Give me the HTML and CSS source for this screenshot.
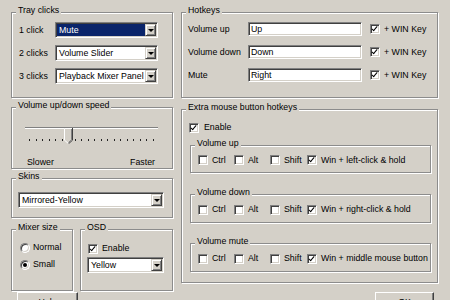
FILE: index.html
```html
<!DOCTYPE html>
<html>
<head>
<meta charset="utf-8">
<link rel="stylesheet" href="styles.css">
</head>
<body>
<div class="dialog">
  <div class="col left">
    <div class="group tray">
      <span class="title">Tray clicks</span>
      <div class="row"><span class="lbl">1 click</span><div class="combo w103"><span class="val sel">Mute</span><span class="dd"></span></div></div>
      <div class="row"><span class="lbl">2 clicks</span><div class="combo w103"><span class="val">Volume Slider</span><span class="dd"></span></div></div>
      <div class="row"><span class="lbl">3 clicks</span><div class="combo w103"><span class="val">Playback Mixer Panel</span><span class="dd"></span></div></div>
    </div>
    <div class="group speed">
      <span class="title">Volume up/down speed</span>
      <div class="slider">
        <div class="channel"></div>
        <div class="ticks"><i></i><i></i><i></i><i></i><i></i><i></i><i></i><i></i><i></i><i></i><i></i><i></i><i></i><i></i><i></i><i></i><i></i><i></i><i></i><i></i></div>
        <svg class="thumb" width="9" height="16" viewBox="0 0 9 16">
          <path d="M0 0H9V12L4.5 16L0 12Z" fill="#d4d0c8"/>
          <path d="M0.5 12.2V0.5H8" stroke="#fff" fill="none"/>
          <path d="M0.5 12.2L4.5 15.6" stroke="#fff" fill="none"/>
          <path d="M8.5 0V12.2L4.5 15.8" stroke="#404040" fill="none"/>
          <path d="M7.5 1V11.8L4.5 14.5" stroke="#808080" fill="none"/>
        </svg>
      </div>
      <div class="scale"><span>Slower</span><span>Faster</span></div>
    </div>
    <div class="group skins">
      <span class="title">Skins</span>
      <div class="combo w146"><span class="val">Mirrored-Yellow</span><span class="dd"></span></div>
    </div>
    <div class="pair">
      <div class="group mixer">
        <span class="title">Mixer size</span>
        <div class="row"><span class="rb"></span><span class="txt3">Normal</span></div>
        <div class="row"><span class="rb on"></span><span class="txt3">Small</span></div>
      </div>
      <div class="group osd">
        <span class="title">OSD</span>
        <div class="row"><span class="cb on"></span><span class="txt4">Enable</span></div>
        <div class="combo w77"><span class="val">Yellow</span><span class="dd"></span></div>
      </div>
    </div>
    <div class="btnrow"><div class="btn help">Help</div></div>
  </div>
  <div class="col right">
    <div class="group hotkeys">
      <span class="title">Hotkeys</span>
      <div class="row"><span class="lbl">Volume up</span><div class="field">Up</div><span class="cb on"></span><span class="txt4">+ WIN Key</span></div>
      <div class="row"><span class="lbl">Volume down</span><div class="field">Down</div><span class="cb on"></span><span class="txt4">+ WIN Key</span></div>
      <div class="row"><span class="lbl">Mute</span><div class="field">Right</div><span class="cb on"></span><span class="txt4">+ WIN Key</span></div>
    </div>
    <div class="group extra">
      <span class="title">Extra mouse button hotkeys</span>
      <div class="row"><span class="cb on"></span><span class="txt5">Enable</span></div>
      <div class="group sub up">
        <span class="title">Volume up</span>
        <span class="opt o1"><span class="cb"></span><span class="txt4">Ctrl</span></span>
        <span class="opt o2"><span class="cb"></span><span class="txt4">Alt</span></span>
        <span class="opt o3"><span class="cb"></span><span class="txt4">Shift</span></span>
        <span class="opt"><span class="cb on"></span><span class="txt4">Win + left-click &amp; hold</span></span>
      </div>
      <div class="group sub down">
        <span class="title">Volume down</span>
        <span class="opt o1"><span class="cb"></span><span class="txt4">Ctrl</span></span>
        <span class="opt o2"><span class="cb"></span><span class="txt4">Alt</span></span>
        <span class="opt o3"><span class="cb"></span><span class="txt4">Shift</span></span>
        <span class="opt"><span class="cb on"></span><span class="txt4">Win + right-click &amp; hold</span></span>
      </div>
      <div class="group sub mute">
        <span class="title">Volume mute</span>
        <span class="opt o1"><span class="cb"></span><span class="txt4">Ctrl</span></span>
        <span class="opt o2"><span class="cb"></span><span class="txt4">Alt</span></span>
        <span class="opt o3"><span class="cb"></span><span class="txt4">Shift</span></span>
        <span class="opt"><span class="cb on"></span><span class="txt4">Win + middle mouse button</span></span>
      </div>
    </div>
    <div class="btnrow end"><div class="btn ok">OK</div></div>
  </div>
</div>
</body>
</html>
```

FILE: styles.css
```css
* { box-sizing: border-box; }
html, body { margin: 0; padding: 0; }
body {
  width: 450px;
  height: 300px;
  overflow: hidden;
  background: #d4d0c8;
  font-family: "Liberation Sans", Arial, sans-serif;
  font-size: 8.8px;
  line-height: 11px;
  color: #000;
}
.dialog { display: flex; gap: 8px; padding: 12px 0 0 11px; }
.col { display: flex; flex-direction: column; }
.left { width: 162px; }
.right { width: 257px; }

.group {
  position: relative;
  border: 1px solid #8c8c8c;
  box-shadow: 1px 1px 0 #fff, inset 1px 1px 0 #fff;
}
.title {
  position: absolute;
  top: -8px;
  left: 4px;
  padding: 0 2px;
  background: #d4d0c8;
  line-height: 11px;
  white-space: nowrap;
}
.row { display: flex; align-items: center; }

/* sunken fields */
.combo, .field {
  border: 1px solid;
  border-color: #808080 #fff #fff #808080;
  box-shadow: inset 1px 1px 0 #404040, inset -1px -1px 0 #d4d0c8;
  background: #fff;
}
.combo { height: 16px; display: flex; padding: 1px; }
.combo .val { flex: 1; padding-left: 2px; line-height: 12px; white-space: nowrap; overflow: hidden; }
.combo .val.sel { background: #0a246a; color: #fff; }
.dd {
  width: 11px;
  height: 12px;
  background: #d4d0c8;
  border: 1px solid;
  border-color: #d4d0c8 #404040 #404040 #d4d0c8;
  box-shadow: inset 1px 1px 0 #fff, inset -1px -1px 0 #808080;
  display: flex;
  align-items: center;
  justify-content: center;
}
.dd::before {
  content: "";
  border-left: 3px solid transparent;
  border-right: 3px solid transparent;
  border-top: 3px solid #000;
}
.w103 { width: 103px; }
.w146 { width: 146px; }
.w77 { width: 77px; }
.field { width: 114px; height: 14px; padding-left: 2px; line-height: 12px; }

/* checkbox / radio */
.cb, .rb {
  position: relative;
  flex: none;
  width: 10px;
  height: 10px;
  border: 1px solid;
  border-color: #808080 #fff #fff #808080;
  box-shadow: inset 1px 1px 0 #404040, inset -1px -1px 0 #d4d0c8;
  background: #fff;
}
.cb.on::after {
  content: "";
  position: absolute;
  left: 2px;
  top: 0px;
  width: 2px;
  height: 5px;
  border: solid #000;
  border-width: 0 1.6px 1.6px 0;
  transform: rotate(40deg);
}
.rb { border-radius: 50%; }
.rb.on::after {
  content: "";
  position: absolute;
  left: 2px;
  top: 2px;
  width: 4px;
  height: 4px;
  border-radius: 50%;
  background: #000;
}
.txt3 { margin-left: 3px; }
.txt4 { margin-left: 4px; white-space: nowrap; }
.txt5 { margin-left: 5px; }

/* tray clicks */
.tray { height: 86px; padding: 9px 0 0 7px; display: flex; flex-direction: column; gap: 7px; }
.tray .lbl { width: 36px; }

/* speed */
.speed { margin-top: 9px; height: 62px; padding-top: 11px; }
.slider { position: relative; margin: 0 14px 0 13px; height: 22px; }
.channel { margin-top: 8px; height: 2px; border-top: 1px solid #808080; border-bottom: 1px solid #fff; }
.ticks { display: flex; justify-content: space-between; margin: 10px 4px 0; }
.ticks i { display: block; width: 1px; height: 2px; background: #222; }
.thumb { position: absolute; left: 39px; top: 1px; }
.scale { display: flex; justify-content: space-between; padding: 0 17px 0 15px; margin-top: 8px; }

/* skins */
.skins { margin-top: 9px; height: 40px; padding: 13px 0 0 6px; }

/* mixer & osd */
.pair { display: flex; gap: 7px; margin-top: 11px; }
.mixer { width: 62px; height: 62px; padding: 12px 0 0 8px; display: flex; flex-direction: column; gap: 6px; }
.osd { width: 93px; height: 62px; padding: 13px 0 0 7px; }
.osd .combo { margin: 3px 0 0 -1px; }

/* buttons */
.btnrow { display: flex; margin-top: 1px; }
.btnrow.end { justify-content: flex-end; margin-top: 9px; padding-right: 4px; }
.btn {
  flex: none;
  height: 16px;
  border: 1px solid;
  border-color: #fff #404040 #404040 #fff;
  box-shadow: inset -1px -1px 0 #808080;
  text-align: center;
  line-height: 14px;
  padding-top: 2px;
}
.help { width: 61px; margin-left: 6px; }
.ok { width: 59px; }

/* hotkeys */
.hotkeys { height: 86px; padding: 9px 0 0 6px; display: flex; flex-direction: column; gap: 9px; }
.hotkeys .lbl { width: 60px; white-space: nowrap; }
.hotkeys .cb { margin-left: 8px; }

/* extra */
.extra { margin-top: 11px; height: 174px; padding: 12px 0 0 7px; }
.sub { width: 241px; margin-left: 1px; display: flex; align-items: center; padding: 2px 0 0 7px; }
.sub.up { height: 28px; margin-top: 12px; }
.sub.down { height: 29px; margin-top: 21px; }
.sub.mute { height: 29px; margin-top: 20px; }
.opt { display: flex; align-items: center; }
.o1, .o2 { width: 36px; }
.o3 { width: 37px; }
```
